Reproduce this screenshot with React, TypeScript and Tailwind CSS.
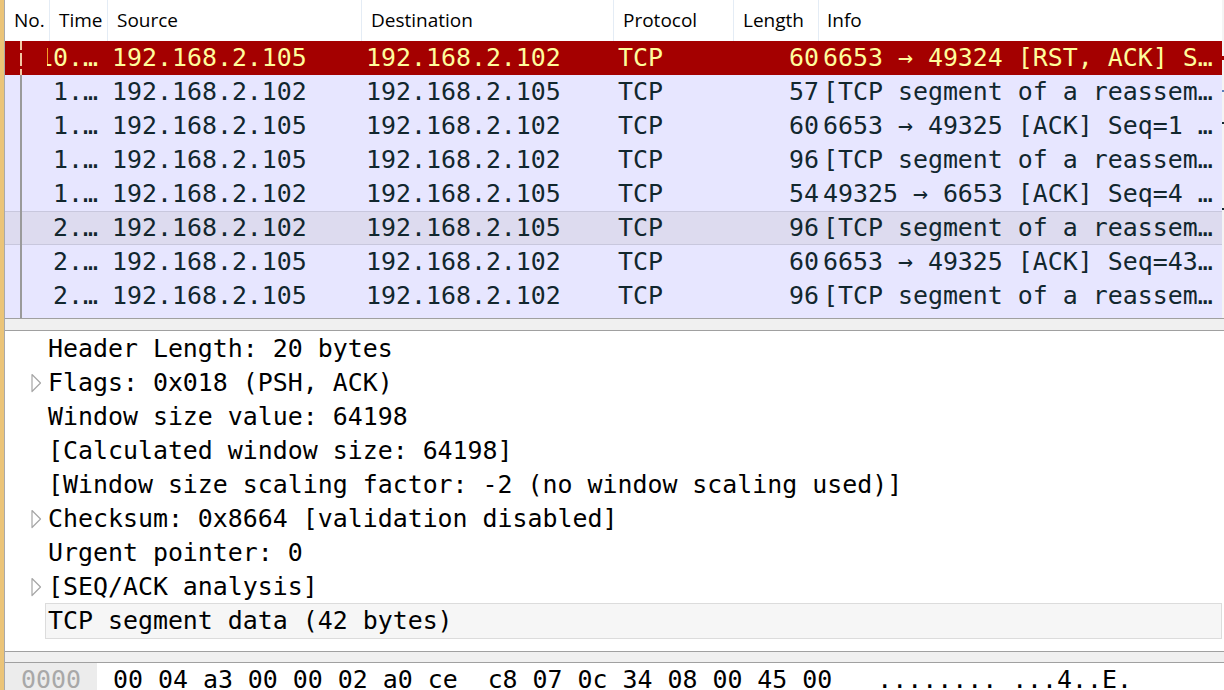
import React from 'react';

interface Packet {
  time: string;
  src: string;
  dst: string;
  len: string;
  info: string;
  rst?: boolean;
  hover?: boolean;
}

const packets: Packet[] = [
  { time: '10.…', src: '192.168.2.105', dst: '192.168.2.102', len: '60', info: '6653 → 49324 [RST, ACK] S…', rst: true },
  { time: '1.…', src: '192.168.2.102', dst: '192.168.2.105', len: '57', info: '[TCP segment of a reassem…' },
  { time: '1.…', src: '192.168.2.105', dst: '192.168.2.102', len: '60', info: '6653 → 49325 [ACK] Seq=1 …' },
  { time: '1.…', src: '192.168.2.105', dst: '192.168.2.102', len: '96', info: '[TCP segment of a reassem…' },
  { time: '1.…', src: '192.168.2.102', dst: '192.168.2.105', len: '54', info: '49325 → 6653 [ACK] Seq=4 …' },
  { time: '2.…', src: '192.168.2.102', dst: '192.168.2.105', len: '96', info: '[TCP segment of a reassem…', hover: true },
  { time: '2.…', src: '192.168.2.105', dst: '192.168.2.102', len: '60', info: '6653 → 49325 [ACK] Seq=43…' },
  { time: '2.…', src: '192.168.2.105', dst: '192.168.2.102', len: '96', info: '[TCP segment of a reassem…' },
  { time: '', src: '', dst: '', len: '', info: '' },
];

const details: { text: string; expand?: boolean; active?: boolean }[] = [
  { text: 'Header Length: 20 bytes' },
  { text: 'Flags: 0x018 (PSH, ACK)', expand: true },
  { text: 'Window size value: 64198' },
  { text: '[Calculated window size: 64198]' },
  { text: '[Window size scaling factor: -2 (no window scaling used)]' },
  { text: 'Checksum: 0x8664 [validation disabled]', expand: true },
  { text: 'Urgent pointer: 0' },
  { text: '[SEQ/ACK analysis]', expand: true },
  { text: 'TCP segment data (42 bytes)', active: true },
];

const mono = "font-['DejaVu_Sans_Mono','Liberation_Mono',monospace] text-[24.9px] leading-[34px] whitespace-pre";

function Expander() {
  return (
    <svg width="12" height="20" viewBox="0 0 12 20" className="shrink-0">
      <path d="M1 1.5 L9.5 10 L1 18.5 Z" fill="none" stroke="#a6a6a6" strokeWidth="1.2" strokeLinejoin="round" />
    </svg>
  );
}

function RelatedLine({ rst }: { rst?: boolean }) {
  if (rst) {
    return (
      <svg width="2" height="34" className="ml-[15px] shrink-0">
        <rect x="0" y="0" width="2" height="9" fill="#f3c9a4" />
        <rect x="0" y="12" width="2" height="13" fill="#f3c9a4" />
        <rect x="0" y="28" width="2" height="6" fill="#f3c9a4" />
      </svg>
    );
  }
  return <div className="ml-[15px] w-[2px] h-[34px] bg-[#9a9a9a] shrink-0" />;
}

function PacketRow({ p }: { p: Packet }) {
  const bg = p.rst
    ? 'bg-[#a40000] text-[#fffc9c]'
    : p.hover
    ? 'bg-[#dddbef] text-[#12272e] shadow-[inset_0_1px_0_#c8c7dd,inset_0_-1px_0_#c8c7dd]'
    : 'bg-[#e7e6ff] text-[#12272e]';
  return (
    <div className={`flex h-[34px] ${bg} ${mono}`}>
      <div className="w-[42px] shrink-0 flex">
        <RelatedLine rst={p.rst} />
      </div>
      <div className="w-[61px] shrink-0 overflow-hidden flex justify-end pr-[10px]">{p.time}</div>
      <div className="w-[254px] shrink-0 pl-[4px] overflow-hidden">{p.src}</div>
      <div className="w-[252px] shrink-0 pl-[4px] overflow-hidden">{p.dst}</div>
      <div className="w-[120px] shrink-0 pl-[4px] overflow-hidden">TCP</div>
      <div className="w-[85px] shrink-0 text-right overflow-hidden">{p.len}</div>
      <div className="flex-1 pl-[4px] overflow-hidden">{p.info}</div>
    </div>
  );
}

const headers: { label: string; w: string }[] = [
  { label: 'No.', w: 'w-[45px]' },
  { label: 'Time', w: 'w-[58px]' },
  { label: 'Source', w: 'w-[254px]' },
  { label: 'Destination', w: 'w-[252px]' },
  { label: 'Protocol', w: 'w-[120px]' },
  { label: 'Length', w: 'w-[85px]' },
];

export default function App() {
  return (
    <div className="w-[1224px] h-[690px] overflow-hidden bg-white flex">
      <div className="w-[4px] shrink-0 bg-[#ebc478]" />
      <div className="w-[1px] shrink-0 bg-[#a9a9a9]" />
      <div className="flex-1 flex flex-col min-w-0">
        {/* packet list */}
        <div className="h-[319px] shrink-0 flex overflow-hidden border-b border-[#a0a0a0]">
          <div className="flex-1 flex flex-col min-w-0">
            <div className="h-[41px] shrink-0 flex bg-white font-['Open_Sans','Noto_Sans',sans-serif] text-[19px] text-black leading-[40px]">
              {headers.map((h) => (
                <div key={h.label} className={`${h.w} shrink-0 pl-[9px] overflow-hidden whitespace-nowrap border-r border-[#e4ecf5]`}>
                  {h.label}
                </div>
              ))}
              <div className="flex-1 pl-[8px]">Info</div>
            </div>
            {packets.map((p, i) => (
              <PacketRow key={i} p={p} />
            ))}
          </div>
          <div className="w-[2px] shrink-0 flex flex-col bg-[#f4f4f4]">
            <div className="h-[56px]" />
            <div className="h-[4px] bg-[#a40000]" />
            <div className="h-[30px]" />
            <div className="h-[2px] bg-[#5a7fb8]" />
            <div className="h-[30px]" />
            <div className="h-[2px] bg-[#12272e]" />
            <div className="h-[84px]" />
            <div className="h-[2px] bg-[#12272e]" />
          </div>
        </div>

        {/* splitter */}
        <div className="h-[12px] shrink-0 bg-[#f0f0f0] border-b border-[#a0a0a0]" />

        {/* packet details */}
        <div className="h-[320px] shrink-0 pt-[1px] text-black overflow-hidden">
          {details.map((d, i) => (
            <div key={i} className="flex items-center h-[34px]">
              <div className="w-[40px] shrink-0 flex justify-end pr-[2px]">{d.expand && <Expander />}</div>
              <div
                className={`flex-1 mr-[2px] ${mono} ${
                  d.active ? 'pl-[2px] bg-[#f6f6f6] border border-[#dcdcdc] leading-[32px]' : 'pl-[3px]'
                }`}
              >
                {d.text}
              </div>
            </div>
          ))}
        </div>

        {/* splitter */}
        <div className="h-[12px] shrink-0 bg-[#f0f0f0] border-y border-[#a0a0a0]" />

        {/* packet bytes */}
        <div className={`flex h-[40px] text-black ${mono}`}>
          <div className="w-[92px] shrink-0 bg-[#ececec] text-[#a8a8a8] pl-[16px]">0000</div>
          <div className="pl-[16px]">
            {'00 04 a3 00 00 02 a0 ce  c8 07 0c 34 08 00 45 00   ........ ...4..E.'}
          </div>
        </div>
      </div>
    </div>
  );
}
